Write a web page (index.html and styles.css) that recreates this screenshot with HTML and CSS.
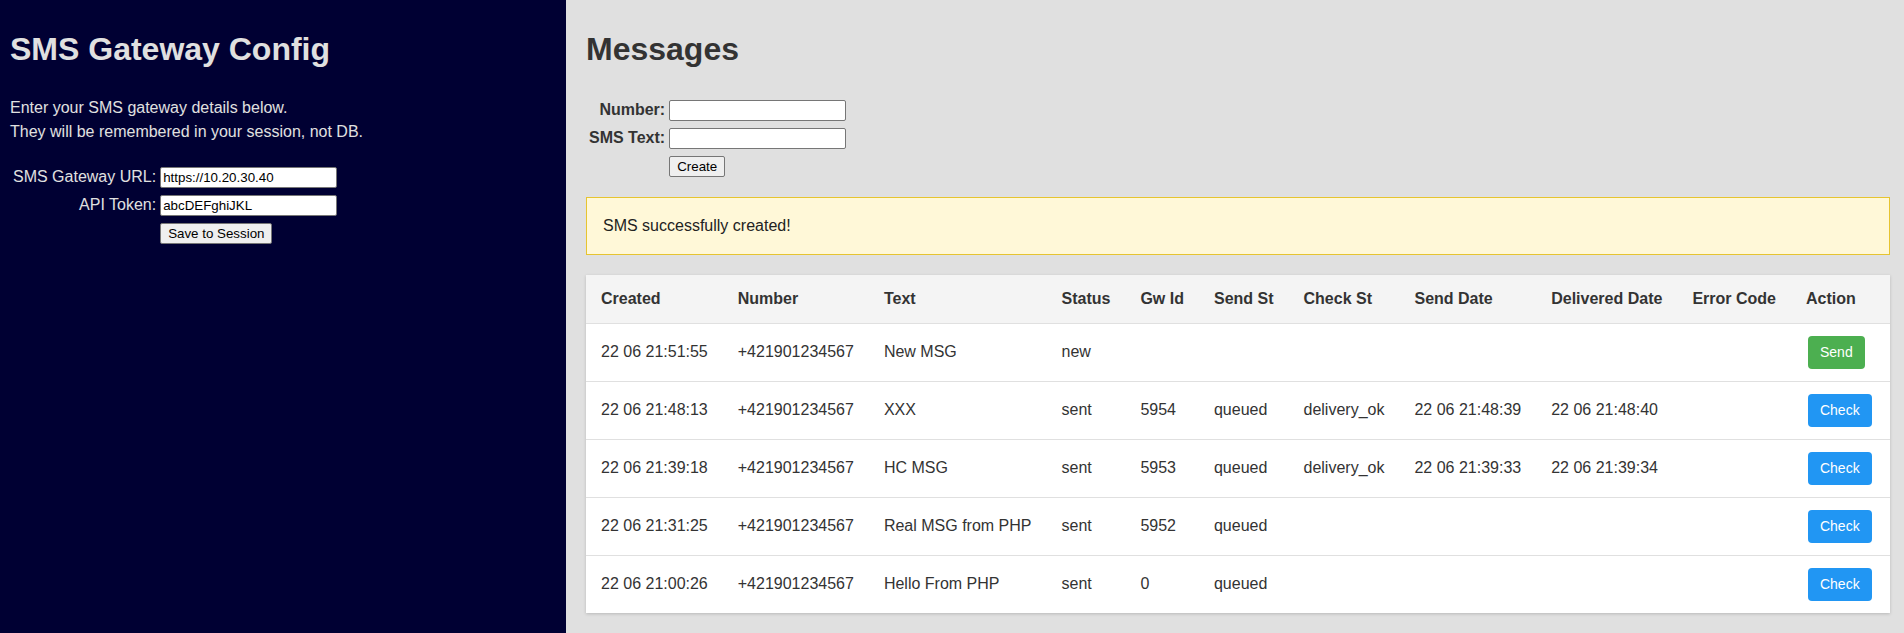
FILE: index.html
```html
<!DOCTYPE html>
<html lang="en">
<head>
<meta charset="utf-8">
<title>SMS Gateway</title>
<link rel="stylesheet" href="styles.css">
</head>
<body>
<div class="layout">
  <aside class="sidebar">
    <h1>SMS Gateway Config</h1>
    <p>Enter your SMS gateway details below.<br>They will be remembered in your session, not DB.</p>
    <form class="cfg-form">
      <table class="form-table">
        <tr><td class="lbl">SMS Gateway URL:</td><td><input type="text" class="field" value="https://10.20.30.40"></td></tr>
        <tr><td class="lbl">API Token:</td><td><input type="text" class="field" value="abcDEFghiJKL"></td></tr>
        <tr><td></td><td><button type="button" class="plain-btn">Save to Session</button></td></tr>
      </table>
    </form>
  </aside>
  <main class="main">
    <h1>Messages</h1>
    <form class="msg-form">
      <table class="form-table">
        <tr><th class="lbl">Number:</th><td><input type="text" class="field"></td></tr>
        <tr><th class="lbl">SMS Text:</th><td><input type="text" class="field"></td></tr>
        <tr><td></td><td><button type="button" class="plain-btn">Create</button></td></tr>
      </table>
    </form>
    <div class="alert">SMS successfully created!</div>
    <div class="card">
      <table class="messages">
        <thead>
          <tr>
            <th>Created</th><th class="num-col">Number</th><th>Text</th><th>Status</th><th>Gw Id</th><th>Send St</th><th>Check St</th><th>Send Date</th><th>Delivered Date</th><th>Error Code</th><th class="action-col">Action</th>
          </tr>
        </thead>
        <tbody>
          <tr>
            <td>22 06 21:51:55</td><td>+421901234567</td><td>New MSG</td><td>new</td><td></td><td></td><td></td><td></td><td></td><td></td>
            <td><button type="button" class="btn btn-send">Send</button></td>
          </tr>
          <tr>
            <td>22 06 21:48:13</td><td>+421901234567</td><td>XXX</td><td>sent</td><td>5954</td><td>queued</td><td>delivery_ok</td><td>22 06 21:48:39</td><td>22 06 21:48:40</td><td></td>
            <td><button type="button" class="btn btn-check">Check</button></td>
          </tr>
          <tr>
            <td>22 06 21:39:18</td><td>+421901234567</td><td>HC MSG</td><td>sent</td><td>5953</td><td>queued</td><td>delivery_ok</td><td>22 06 21:39:33</td><td>22 06 21:39:34</td><td></td>
            <td><button type="button" class="btn btn-check">Check</button></td>
          </tr>
          <tr>
            <td>22 06 21:31:25</td><td>+421901234567</td><td>Real MSG from PHP</td><td>sent</td><td>5952</td><td>queued</td><td></td><td></td><td></td><td></td>
            <td><button type="button" class="btn btn-check">Check</button></td>
          </tr>
          <tr>
            <td>22 06 21:00:26</td><td>+421901234567</td><td>Hello From PHP</td><td>sent</td><td>0</td><td>queued</td><td></td><td></td><td></td><td></td>
            <td><button type="button" class="btn btn-check">Check</button></td>
          </tr>
        </tbody>
      </table>
    </div>
  </main>
</div>
</body>
</html>
```

FILE: styles.css
```css
html, body {
  margin: 0;
  padding: 0;
}
body {
  font-family: "Liberation Sans", Arial, sans-serif;
  font-size: 16px;
  line-height: 1.5;
  background: #e0e0e0;
  color: #333;
}
.layout {
  display: flex;
  min-height: 633px;
}
.sidebar {
  width: 566px;
  flex: 0 0 566px;
  box-sizing: border-box;
  background: #000033;
  color: #e0e0e0;
  padding: 4px 10px 0 10px;
}
.sidebar h1,
.main h1 {
  font-size: 32px;
  font-weight: bold;
  line-height: 48px;
  margin: 21.44px 0;
}
.sidebar p {
  margin: 22.5px 0 18px;
}
.main {
  flex: 1;
  min-width: 0;
  padding: 4px 14px 0 20px;
}
.cfg-form, .msg-form {
  margin: 0;
}
.form-table {
  border-spacing: 2px;
}
.form-table td, .form-table th {
  padding: 1px;
}
.form-table .lbl {
  text-align: right;
}
.msg-form .lbl {
  font-weight: bold;
}
.field {
  font-family: "Liberation Sans", Arial, sans-serif;
  font-size: 13.333px;
  width: 177px;
  box-sizing: border-box;
  padding: 1px 2px;
  border: 1px solid #767676;
  border-radius: 2px;
  background: #fff;
  color: #000;
  height: 21px;
}
.plain-btn {
  font-family: "Liberation Sans", Arial, sans-serif;
  font-size: 13.333px;
  padding: 1px 7px;
  border: 1px solid #767676;
  border-radius: 2px;
  background: #efefef;
  color: #000;
  height: 21px;
}
.alert {
  margin: 16px 0 20px;
  padding: 16px;
  background: #fff8d8;
  border: 1px solid #e6c430;
  color: #222;
}
.card {
  background: #fff;
  box-shadow: 0 1px 3px rgba(0, 0, 0, 0.18);
}
.messages {
  width: 100%;
  border-collapse: collapse;
}
.messages th,
.messages td {
  text-align: left;
  padding: 12px 15px;
  border-bottom: 1px solid #e0e0e0;
  white-space: nowrap;
  color: #333;
}
.messages .num-col {
  padding-right: 16px;
}
.messages .action-col {
  width: 100%;
}
.messages thead th {
  background: #f4f4f4;
  font-weight: bold;
}
.messages tbody tr:last-child td {
  border-bottom: none;
}
.btn {
  font-family: "Liberation Sans", Arial, sans-serif;
  font-size: 14px;
  line-height: 17px;
  padding: 8px 12px;
  margin-left: 2px;
  border: none;
  border-radius: 4px;
  color: #fff;
  cursor: pointer;
  vertical-align: middle;
}
.btn-send {
  background: #4caf50;
}
.btn-check {
  background: #2196f3;
}
```
